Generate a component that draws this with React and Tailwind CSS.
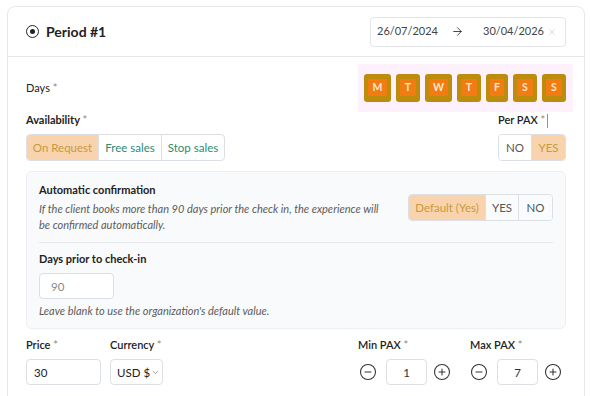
import { ArrowRight, X, ChevronDown, CircleMinus, CirclePlus } from "lucide-react";

const DAYS = [
  { d: "M", w: "w-[27px]" },
  { d: "T", w: "w-[24px]" },
  { d: "W", w: "w-[27px]" },
  { d: "T", w: "w-[24px]" },
  { d: "F", w: "w-[22px]" },
  { d: "S", w: "w-[24px]" },
  { d: "S", w: "w-[24px]" },
];

// Segmented toggle group; the selected item gets the peach fill.
function Segmented({ items, selected, tone = "gray", className = "" }) {
  return (
    <div className={`flex rounded-[4px] border border-[#dcdfe3] bg-white overflow-hidden text-[11.5px] ${className}`}>
      {items.map((it, i) => {
        const on = i === selected;
        return (
          <div
            key={it.label}
            className={`flex items-center justify-center ${it.w} ${i > 0 ? "border-l border-[#dcdfe3]" : ""} ${
              on
                ? "bg-[#f8d3ad] text-[#c99a3c]"
                : tone === "teal"
                  ? "text-[#2e8c70]"
                  : "bg-[#fafbfc] text-[#555]"
            }`}
          >
            {it.label}
          </div>
        );
      })}
    </div>
  );
}

function Label({ children, weight = "font-semibold" }) {
  return (
    <div className={`text-[11px] leading-[16px] text-[#222] whitespace-nowrap ${weight}`}>
      {children} <span className="font-normal text-[#888]">*</span>
    </div>
  );
}

function Stepper({ value }) {
  return (
    <div className="flex items-center">
      <CircleMinus size={18} strokeWidth={1.4} className="shrink-0 text-[#333]" />
      <div className="ml-[9px] mr-[6px] w-[41px] h-[26px] rounded-[4px] border border-[#dcdfe3] flex items-center justify-center text-[11.5px] text-[#333]">
        {value}
      </div>
      <CirclePlus size={18} strokeWidth={1.4} className="shrink-0 text-[#333]" />
    </div>
  );
}

export default function App() {
  return (
    <div className="w-[590px] h-[396px] overflow-hidden bg-white pt-[6px] pl-[7px] pr-[5px] font-['Lato','Open_Sans',sans-serif]">
      <div className="rounded-t-[8px] border border-[#e5e7eb] h-[420px]">
        {/* header */}
        <div className="h-[50px] flex items-center justify-between pl-[18px] pr-[18px] border-b border-[#e5e7eb]">
          <div className="flex items-center gap-[7px]">
            <span className="w-[13px] h-[13px] rounded-full border-[1.5px] border-[#222] flex items-center justify-center">
              <span className="w-[5px] h-[5px] rounded-full bg-[#222]" />
            </span>
            <span className="text-[14px] font-bold text-[#222]">Period #1</span>
          </div>
          <div className="w-[196px] h-[30px] rounded-[4px] border border-[#e3e5e8] flex items-center pl-[6px] pr-[8px] text-[11px] text-[#444]">
            <span>26/07/2024</span>
            <ArrowRight size={13} strokeWidth={1.8} className="shrink-0 ml-[13px] text-[#444]" />
            <span className="ml-[19px]">30/04/2026</span>
            <X size={10} strokeWidth={1.5} className="shrink-0 ml-auto text-[#c8c8c8]" />
          </div>
        </div>

        <div className="px-[18px]">
          {/* days */}
          <div className="mt-[7px] flex items-center justify-between">
            <Label weight="font-normal">Days</Label>
            <div className="h-[48px] bg-[#fdf1fd] flex items-center gap-[5px] pl-[6px] pr-[7px] -mr-[7px]">
              {DAYS.map((x, i) => (
                <div key={i} className={`${x.w} h-[28px] rounded-[3px] bg-[#bd8c0c] px-[4px] pt-[5px] pb-[6px]`}>
                  <div className="w-full h-full bg-[#f07c12] flex items-center justify-center text-[10.5px] font-bold text-[#fde6cf]">
                    {x.d}
                  </div>
                </div>
              ))}
            </div>
          </div>

          {/* availability + per pax */}
          <div className="flex justify-between">
            <div>
              <Label weight="font-bold">Availability</Label>
              <Segmented
                className="mt-[6px] h-[27px]"
                tone="teal"
                selected={0}
                items={[
                  { label: "On Request", w: "w-[71px]" },
                  { label: "Free sales", w: "w-[63px]" },
                  { label: "Stop sales", w: "w-[63px]" },
                ]}
              />
            </div>
            <div className="w-[68px]">
              <div className="text-[11px] leading-[16px] font-semibold text-[#222] whitespace-nowrap">
                Per PAX <span className="font-normal text-[#888]">*</span>
                <span className="inline-block ml-[2px] w-[1px] h-[14px] align-middle bg-[#e0707a]" />
              </div>
              <Segmented
                className="mt-[6px] h-[27px]"
                selected={1}
                items={[
                  { label: "NO", w: "w-[33px] !bg-white" },
                  { label: "YES", w: "w-[35px]" },
                ]}
              />
            </div>
          </div>

          {/* automatic confirmation */}
          <div className="mt-[10px] rounded-[6px] border border-[#eceef1] bg-[#f9fafb] px-[12px] pt-[10px] pb-[9px]">
            <div className="flex items-center justify-between">
              <div className="w-[350px]">
                <div className="text-[11px] leading-[16px] font-bold text-[#222]">Automatic confirmation</div>
                <div className="mt-[3px] text-[11px] leading-[16px] italic text-[#5c5c5c]">
                  If the client books more than 90 days prior the check in, the experience will be confirmed automatically.
                </div>
              </div>
              <Segmented
                className="h-[27px]"
                selected={0}
                items={[
                  { label: "Default (Yes)", w: "w-[76px]" },
                  { label: "YES", w: "w-[33px]" },
                  { label: "NO", w: "w-[34px]" },
                ]}
              />
            </div>
            <div className="mt-[9px] border-t border-[#e5e7eb]" />
            <div className="mt-[8px] text-[11px] leading-[16px] font-bold text-[#222]">Days prior to check-in</div>
            <div className="mt-[6px] w-[75px] h-[26px] rounded-[4px] border border-[#dcdfe3] bg-white flex items-center pl-[11px] text-[11.5px] text-[#888]">
              90
            </div>
            <div className="mt-[4px] text-[11px] leading-[16px] italic text-[#5c5c5c]">
              Leave blank to use the organization's default value.
            </div>
          </div>

          {/* price / currency / pax */}
          <div className="mt-[8px] flex">
            <div className="w-[84px]">
              <Label>Price</Label>
              <div className="mt-[6px] w-[75px] h-[26px] rounded-[4px] border border-[#dcdfe3] flex items-center pl-[7px] text-[11.5px] text-[#222]">
                30
              </div>
            </div>
            <div className="w-[248px]">
              <Label>Currency</Label>
              <div className="mt-[6px] w-[53px] h-[26px] rounded-[4px] border border-[#dcdfe3] flex items-center pl-[6px] text-[11.5px] text-[#222] whitespace-nowrap">
                USD $<ChevronDown size={9} strokeWidth={1.5} className="shrink-0 ml-[1px] text-[#555]" />
              </div>
            </div>
            <div className="w-[112px]">
              <Label>Min PAX</Label>
              <div className="mt-[6px] ml-[1px]">
                <Stepper value="1" />
              </div>
            </div>
            <div>
              <Label>Max PAX</Label>
              <div className="mt-[6px]">
                <Stepper value="7" />
              </div>
            </div>
          </div>
        </div>
      </div>
    </div>
  );
}
